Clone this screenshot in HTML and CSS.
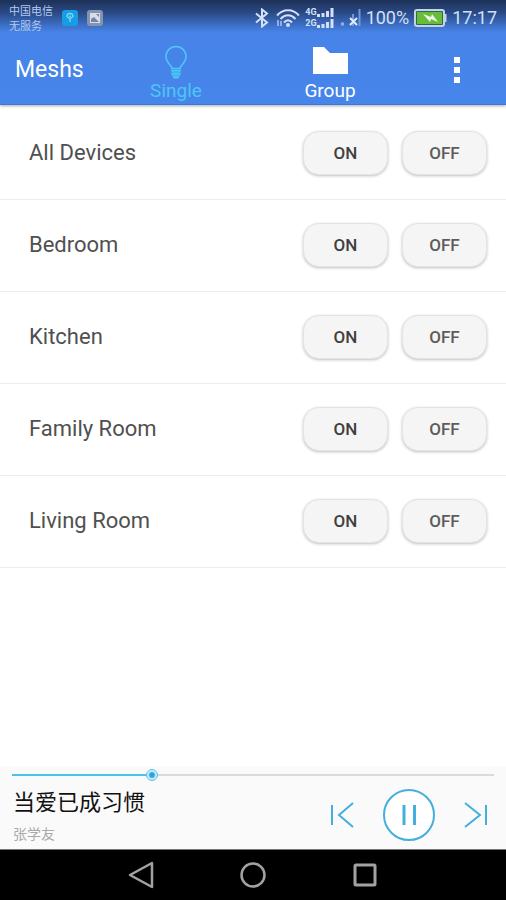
FILE: index.html
```html
<!DOCTYPE html>
<html lang="en">
<head>
<meta charset="utf-8">
<meta name="viewport" content="width=device-width, initial-scale=1">
<title>Meshs</title>
<link rel="stylesheet" href="styles.css">
</head>
<body>
<div class="screen">
  <header class="header">
    <div class="status">
      <div class="carrier" lang="zh"><span>中国电信</span><span>无服务</span></div>
      <svg class="notice" width="16" height="16" viewBox="0 0 16 16" aria-hidden="true">
        <rect width="16" height="16" rx="3" fill="#169ee4"/>
        <path d="M5 6.5a3 3 0 0 1 6 0L8 9zM8 9v3" fill="none" stroke="#7fd2f6" stroke-width="1.3"/>
        <circle cx="8" cy="6.5" r="1" fill="#7fd2f6"/>
      </svg>
      <svg class="notice" width="16" height="16" viewBox="0 0 16 16" aria-hidden="true">
        <rect width="16" height="16" rx="3" fill="#8593ad"/>
        <rect x="3" y="3" width="10" height="10" fill="#d5deee"/>
        <path d="M4 12v-3l3-2 5 5zM9 4l3 3V4z" fill="#7584a0"/>
      </svg>
      <div class="indicators">
        <svg width="14" height="20" viewBox="0 0 14 20" aria-hidden="true">
          <path d="M1 5.500l11 9L7 18.500V1.500l5 4-11 9" fill="none" stroke="#d3e0f8" stroke-width="2"/>
        </svg>
        <svg class="wifi" width="24" height="20" viewBox="0 0 24 20" aria-hidden="true">
          <path d="M1 7.500c6-7 16-7 22 0M4.500 11c4.500-5 10.500-5 15 0M8 14.500c2.500-3 5.500-3 8 0" fill="none" stroke="#d3e0f8" stroke-width="2"/>
          <circle cx="12" cy="17" r="2" fill="#d3e0f8"/>
          <path d="M2 12v6M5 13v5" stroke="#a9c4f3" stroke-width="1.500"/>
        </svg>
        <div class="networks">
          <div class="network"><span>4G</span><svg width="17" height="9" viewBox="0 0 17 9" aria-hidden="true"><path d="M1.500 9V6M6 9V5M10.500 9V3M15 9V0" stroke="#d3e0f8" stroke-width="3"/></svg></div>
          <div class="network"><span>2G</span><svg width="17" height="9" viewBox="0 0 17 9" aria-hidden="true"><path d="M1.500 9V6M6 9V5M10.500 9V3M15 9V0" stroke="#d3e0f8" stroke-width="3"/></svg></div>
        </div>
        <svg class="nosim" width="20" height="20" viewBox="0 0 20 20" aria-hidden="true">
          <path d="M0 16h3" stroke="#8fb2ef" stroke-width="3"/>
          <path d="M12 18V6M18.500 18V1" stroke="#7199df" stroke-width="2"/>
          <path d="M9 10l7 7M16 10l-7 7" stroke="#e3ecfb" stroke-width="2"/>
        </svg>
        <span>100%</span>
        <svg class="battery" width="33" height="18" viewBox="0 0 33 18" aria-hidden="true">
          <rect x="1" y="1" width="29" height="16" rx="2" fill="#2b6a54" stroke="#c6d4df" stroke-width="2"/>
          <rect x="3" y="3" width="25" height="12" fill="#69bb3c"/>
          <path d="M31 5v8" stroke="#c6d4df" stroke-width="3"/>
          <path d="M9 5l8 3 1-3 6 8-7-3-1 3z" fill="#edf7e9"/>
        </svg>
        <span>17:17</span>
      </div>
    </div>
    <nav class="appbar">
      <h1 class="title">Meshs</h1>
      <a class="tab tab-active" href="#single" aria-current="page">
        <svg width="24" height="36" viewBox="0 0 24 36" aria-hidden="true">
          <path d="M8 23.500c0-3-6-5.500-6-12a10 10 0 0 1 20 0c0 6.500-6 9-6 12z" fill="none" stroke="currentColor" stroke-width="1.600"/>
          <path d="M7.500 25h9v5l-2.500 4h-4l-2.500-4z" fill="currentColor" fill-opacity=".65"/>
          <path d="M7 25.500h10M7.500 29h9M9 32h6" stroke="currentColor" stroke-width="1.500"/>
        </svg>
        <span>Single</span>
      </a>
      <a class="tab" href="#group">
        <svg width="36" height="36" viewBox="0 0 36 36" aria-hidden="true">
          <path d="M1 2h11l6 6h18v21H1z" fill="currentColor"/>
        </svg>
        <span>Group</span>
      </a>
      <button class="more" type="button" aria-label="More options">
        <svg width="6" height="28" viewBox="0 0 6 28" aria-hidden="true"><path d="M0 1h6v6H0zM0 11h6v6H0zM0 21h6v6H0z" fill="#fff"/></svg>
      </button>
    </nav>
  </header>

  <main class="content">
    <ul class="rooms">
      <li class="room"><span class="name">All Devices</span><button class="switch" type="button">ON</button><button class="switch switch-off" type="button">OFF</button></li>
      <li class="room"><span class="name">Bedroom</span><button class="switch" type="button">ON</button><button class="switch switch-off" type="button">OFF</button></li>
      <li class="room"><span class="name">Kitchen</span><button class="switch" type="button">ON</button><button class="switch switch-off" type="button">OFF</button></li>
      <li class="room"><span class="name">Family Room</span><button class="switch" type="button">ON</button><button class="switch switch-off" type="button">OFF</button></li>
      <li class="room"><span class="name">Living Room</span><button class="switch" type="button">ON</button><button class="switch switch-off" type="button">OFF</button></li>
    </ul>
  </main>

  <section class="player" aria-label="Player">
    <input class="seek" type="range" min="0" max="200" value="57" aria-label="Playback position">
    <div class="track">
      <div class="song" lang="zh">
        <div class="song-title">当爱已成习惯</div>
        <div class="artist">张学友</div>
      </div>
      <button class="control" type="button" aria-label="Previous">
        <svg width="24" height="28" viewBox="0 0 24 28" aria-hidden="true"><path d="M2 4v20M23 2L9 14l14 12" fill="none" stroke="currentColor" stroke-width="2"/></svg>
      </button>
      <button class="control" type="button" aria-label="Pause">
        <svg width="54" height="54" viewBox="0 0 54 54" aria-hidden="true"><circle cx="27" cy="27" r="25" fill="#fff" stroke="currentColor" stroke-width="2"/><path d="M22 17v20M32.500 17v20" stroke="currentColor" stroke-width="3"/></svg>
      </button>
      <button class="control" type="button" aria-label="Next">
        <svg width="24" height="28" viewBox="0 0 24 28" aria-hidden="true"><path d="M22 4v20M1 2l15 12L1 26" fill="none" stroke="currentColor" stroke-width="2"/></svg>
      </button>
    </div>
  </section>

  <nav class="system" aria-label="System">
    <button class="key" type="button" aria-label="Back"><svg width="28" height="28" viewBox="0 0 28 28" aria-hidden="true"><path d="M25 2v24L3 14z" fill="none" stroke="currentColor" stroke-width="2.500" stroke-linejoin="round"/></svg></button>
    <button class="key" type="button" aria-label="Home"><svg width="28" height="28" viewBox="0 0 28 28" aria-hidden="true"><circle cx="14" cy="14" r="11.500" fill="none" stroke="currentColor" stroke-width="2.500"/></svg></button>
    <button class="key" type="button" aria-label="Recent apps"><svg width="28" height="28" viewBox="0 0 28 28" aria-hidden="true"><rect x="4" y="4" width="20" height="20" rx="1" fill="none" stroke="currentColor" stroke-width="3"/></svg></button>
  </nav>
</div>
</body>
</html>
```
FILE: styles.css
```css
* {
  box-sizing: border-box;
}

body {
  margin: 0;
  background: #fff;
  color: #505050;
  font-family: Roboto, "Noto Sans CJK SC", sans-serif;
}

button {
  padding: 0;
  border: 0;
  background: none;
  font: inherit;
}

svg {
  display: block;
  flex: none;
}

.screen {
  display: flex;
  flex-direction: column;
  min-height: 100vh;
}

.header {
  background: linear-gradient(#1d3158, #294882 12px, #4783e8 32px, #4685ea);
  border-bottom: 1px solid #3c78d8;
  box-shadow: 0 1px 3px rgba(0, 0, 0, 0.35);
}

.status {
  display: flex;
  align-items: center;
  height: 34px;
  padding: 1px 9px 0;
  color: #d3e0f8;
}

.carrier {
  display: flex;
  flex-direction: column;
  padding-top: 2px;
  margin-right: 9px;
  color: #b4c9ef;
  font-size: 11px;
  line-height: 15px;
}

.notice {
  margin-right: 9px;
}

.indicators {
  display: flex;
  align-items: center;
  margin-left: auto;
  font-size: 18px;
}

.wifi {
  margin: 0 5px 0 7px;
}

.networks {
  display: grid;
  gap: 2px;
}

.network {
  display: flex;
  align-items: center;
  font-size: 9px;
  font-weight: 700;
  line-height: 9px;
}

.nosim {
  margin: 0 5px 0 7px;
}

.battery {
  margin: 0 5px;
}

.appbar {
  display: grid;
  grid-template-columns: 99fr 154fr 154fr 99fr;
  height: 70px;
}

.title {
  margin: 0;
  padding-left: 15px;
  color: #fff;
  font-size: 23px;
  font-weight: 400;
  line-height: 72px;
}

.tab {
  display: flex;
  flex-direction: column;
  align-items: center;
  padding-top: 11px;
  color: #fff;
  font-size: 19px;
  font-weight: 400;
  line-height: 20px;
  text-decoration: none;
}

.tab-active {
  color: #4cc6f8;
}

.more {
  display: grid;
  place-items: center;
}

.content {
  flex: 1;
  padding-top: 3px;
}

.rooms {
  margin: 0;
  padding: 0;
  list-style: none;
}

.room {
  display: flex;
  align-items: center;
  gap: 14px;
  height: 92px;
  padding: 0 19px 1px 29px;
  border-bottom: 1px solid #ececec;
}

.name {
  flex: 1;
  font-size: 22px;
  line-height: 28px;
}

.switch {
  width: 85px;
  height: 44px;
  border: 1px solid #e4e4e4;
  border-radius: 16px;
  background: #f5f5f5;
  box-shadow: 0 1px 3px rgba(0, 0, 0, 0.25);
  color: #404040;
  font-size: 17px;
  font-weight: 500;
}

.switch-off {
  color: #5c5c5c;
}

.player {
  padding: 3px 12px 0;
  border-bottom: 1px solid #777;
  background: #fafafa;
}

.seek {
  display: block;
  width: 100%;
  height: 12px;
  margin: 0;
  appearance: none;
  background: linear-gradient(90deg, #4fc0ee 29%, #dadada 29%) center / 100% 2px no-repeat;
}

.seek::-webkit-slider-thumb {
  width: 12px;
  height: 12px;
  appearance: none;
  border: 1px solid #58bfe9;
  border-radius: 50%;
  background: radial-gradient(circle, #2ba4dc 2px, #d5effa 4px);
}

.track {
  display: flex;
  align-items: center;
  gap: 28px;
  height: 68px;
  padding: 0 6px 0 1px;
}

.song {
  flex: 1;
  padding-top: 4px;
}

.song-title {
  color: #111;
  font-size: 22px;
  line-height: 34px;
}

.artist {
  color: #aaa;
  font-size: 14px;
  line-height: 28px;
}

.control {
  color: #43afde;
}

.system {
  display: flex;
  justify-content: center;
  gap: 84px;
  height: 50px;
  background: #000;
}

.key {
  display: grid;
  place-items: center;
  color: #a2a2a2;
}
```
